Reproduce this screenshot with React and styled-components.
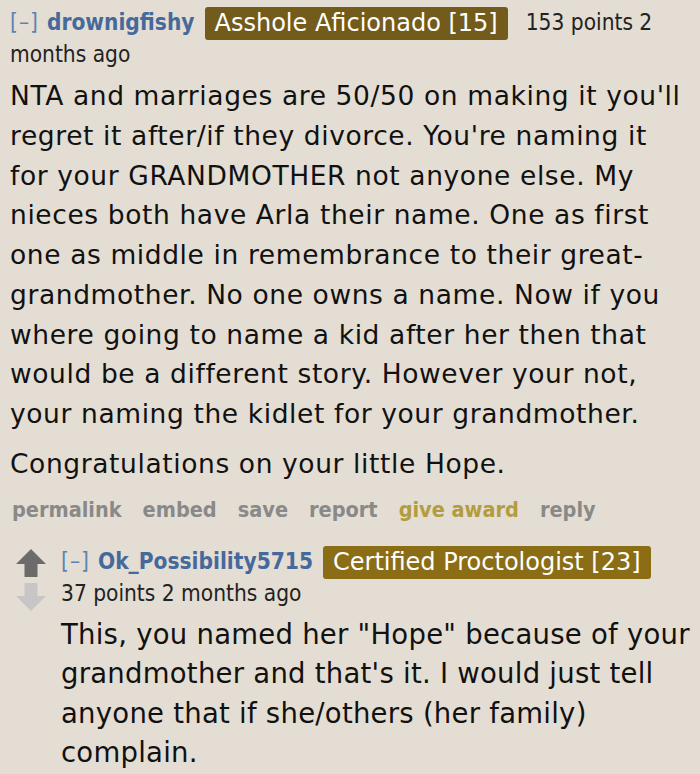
import React from 'react'
import styled, { createGlobalStyle } from 'styled-components'

const GlobalStyle = createGlobalStyle`
  html, body {
    margin: 0;
    padding: 0;
    background: #e4ddd3;
  }
`

const Page = styled.div`
  width: 700px;
  height: 774px;
  overflow: hidden;
  background: #e4ddd3;
  padding: 6px 10px 0 10px;
  box-sizing: border-box;
`

const Tagline = styled.div`
  font-family: "DejaVu Sans Condensed", "Liberation Sans Narrow", "Liberation Sans", sans-serif;
  font-size: 22.5px;
  line-height: 32px;
  color: #222;
`

const Expand = styled.span`
  color: #5a83b5;
  letter-spacing: 1px;
  margin-right: 8px;
`

const Author = styled.span`
  color: #46699c;
  font-weight: bold;
  margin-right: 10px;
`

const Flair = styled.span`
  display: inline-block;
  background: ${p => p.$bg};
  color: #fff;
  font-family: "DejaVu Sans", Verdana, sans-serif;
  font-size: 24px;
  line-height: 33px;
  padding: 0 10px;
  border-radius: 3px;
  margin: -2px 18px -2px 0;
  vertical-align: middle;
`

const Body = styled.div`
  font-family: "DejaVu Sans", Verdana, sans-serif;
  font-size: ${p => p.$size}px;
  letter-spacing: ${p => p.$ls}px;
  line-height: ${p => p.$lh}px;
  color: #111;
  margin-top: 6px;

  p {
    margin: 0 0 10px 0;
  }
  p:last-child {
    margin-bottom: 0;
  }
`

const Buttons = styled.ul`
  list-style: none;
  display: flex;
  gap: 21px;
  margin: 11px 0 0 2px;
  padding: 0;
  font-family: "DejaVu Sans Condensed", "Liberation Sans Narrow", "Liberation Sans", sans-serif;
  font-weight: bold;
  font-size: 21.5px;
  line-height: 30px;
`

const Button = styled.li`
  color: ${p => (p.$gold ? '#b39c40' : '#898989')};
`

const Child = styled.div`
  display: flex;
  margin-top: 20px;
`

const Votes = styled.div`
  display: flex;
  flex-direction: column;
  gap: 6px;
  width: 51px;
  padding: 4px 0 0 6px;
  box-sizing: border-box;
  flex-shrink: 0;
`

const Entry = styled.div`
  flex: 1;
  min-width: 0;
`

const Arrow = ({ down, color }) => (
  <svg width="30" height="28" viewBox="0 0 30 28">
    <path
      d="M15 0 L30 15 L21.5 15 L21.5 28 L8.5 28 L8.5 15 L0 15 Z"
      fill={color}
      transform={down ? 'rotate(180 15 14)' : undefined}
    />
  </svg>
)

export default function App() {
  return (
    <Page>
      <GlobalStyle />
      <Tagline>
        <Expand>[–]</Expand>
        <Author>drownigfishy</Author>
        <Flair $bg="#735b1b">Asshole Aficionado [15]</Flair>
        153 points 2 months ago
      </Tagline>
      <Body $size={26.5} $ls={0.6} $lh={39.75}>
        <p>
          NTA and marriages are 50/50 on making it you'll regret it after/if they divorce. You're naming it
          for your GRANDMOTHER not anyone else. My nieces both have Arla their name. One as first one as
          middle in remembrance to their great-grandmother. No one owns a name. Now if you where going to
          name a kid after her then that would be a different story. However your not, your naming the
          kidlet for your grandmother.
        </p>
        <p>Congratulations on your little Hope.</p>
      </Body>
      <Buttons>
        <Button>permalink</Button>
        <Button>embed</Button>
        <Button>save</Button>
        <Button>report</Button>
        <Button $gold>give award</Button>
        <Button>reply</Button>
      </Buttons>
      <Child>
        <Votes>
          <Arrow color="#6b6b6b" />
          <Arrow down color="#c6c6c6" />
        </Votes>
        <Entry>
          <Tagline>
            <Expand>[–]</Expand>
            <Author>Ok_Possibility5715</Author>
            <Flair $bg="#8b6d15">Certified Proctologist [23]</Flair>
            <br />
            37 points 2 months ago
          </Tagline>
          <Body $size={27.5} $ls={0.25} $lh={39.5}>
            <p>
              This, you named her "Hope" because of your grandmother and that's it. I would just tell
              anyone that if she/others (her family) complain.
            </p>
          </Body>
        </Entry>
      </Child>
    </Page>
  )
}
